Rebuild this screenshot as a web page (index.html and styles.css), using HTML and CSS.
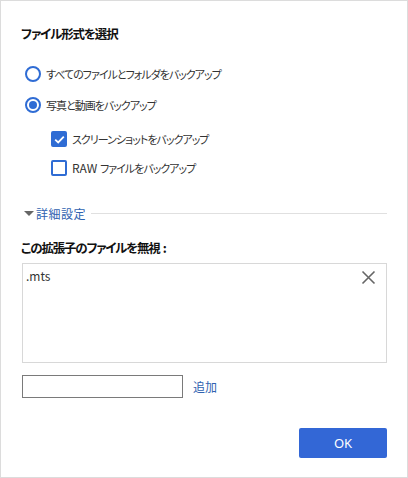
FILE: index.html
```html
<!DOCTYPE html>
<html lang="ja">
<head>
<meta charset="utf-8">
<link rel="stylesheet" href="styles.css">
</head>
<body>
<div class="dialog">
  <div class="title">ファイル形式を選択</div>
  <div class="radios">
    <div class="row"><span class="radio"></span><span>すべてのファイルとフォルダをバックアップ</span></div>
    <div class="row"><span class="radio checked"></span><span>写真と動画をバックアップ</span></div>
  </div>
  <div class="checks">
    <div class="row"><span class="check checked"><svg width="15" height="15" viewBox="0 0 15 15"><path d="M3.2 7.6 L6.2 10.4 L11.8 4.6" fill="none" stroke="#fff" stroke-width="1.8"/></svg></span><span>スクリーンショットをバックアップ</span></div>
    <div class="row"><span class="check"></span><span><span class="latin">RAW </span>ファイルをバックアップ</span></div>
  </div>
  <div class="advanced">
    <span class="tri"></span>
    <span class="link">詳細設定</span>
    <span class="rule"></span>
  </div>
  <div class="label">この拡張子のファイルを無視<span class="colon">:</span></div>
  <div class="box">
    <span class="ext">.mts</span>
    <svg class="close" width="15" height="15" viewBox="0 0 15 15"><path d="M1.5 1.5 L13.5 13.5 M13.5 1.5 L1.5 13.5" stroke="#666" stroke-width="1.6" fill="none"/></svg>
  </div>
  <div class="addrow">
    <span class="input"></span>
    <span class="link add">追加</span>
  </div>
  <div class="footer">
    <button class="ok">OK</button>
  </div>
</div>
</body>
</html>
```
FILE: styles.css
```css
html, body {
  margin: 0;
  padding: 0;
  background: #fff;
}
body {
  width: 408px;
  height: 478px;
  box-sizing: border-box;
  border: 1px solid #dcdcdc;
  font-family: "Noto Sans CJK JP", "Noto Sans", sans-serif;
  font-feature-settings: "palt";
  font-size: 11px;
  letter-spacing: -1px;
  color: #333;
}
.dialog {
  display: flex;
  flex-direction: column;
  padding: 23px 20px 0 20px;
}
.title {
  height: 20px;
  line-height: 20px;
  font-size: 12.5px;
  letter-spacing: -1.1px;
  font-weight: bold;
  color: #111;
}
.row {
  display: flex;
  align-items: center;
  height: 20px;
  line-height: 20px;
}
.latin {
  font-size: 12px;
  letter-spacing: 0;
}
.radios {
  display: flex;
  flex-direction: column;
  gap: 11px;
  margin-top: 20px;
}
.radio {
  box-sizing: border-box;
  width: 16px;
  height: 16px;
  border: 2px solid #2f6cd4;
  border-radius: 50%;
  margin-left: 4px;
  margin-right: 5px;
  display: flex;
  align-items: center;
  justify-content: center;
}
.radio.checked::after {
  content: "";
  width: 8px;
  height: 8px;
  border-radius: 50%;
  background: #2f6cd4;
}
.checks {
  display: flex;
  flex-direction: column;
  gap: 9px;
  margin-top: 14px;
  padding-left: 30px;
}
.check {
  box-sizing: border-box;
  width: 16px;
  height: 16px;
  border: 2px solid #2f6cd4;
  border-radius: 2px;
  margin-right: 5px;
  display: flex;
  align-items: center;
  justify-content: center;
}
.check.checked {
  background: #2f6cd4;
}
.check svg {
  flex: none;
}
.advanced {
  display: flex;
  align-items: center;
  height: 20px;
  margin-top: 25px;
}
.tri {
  width: 0;
  height: 0;
  border-left: 5px solid transparent;
  border-right: 5px solid transparent;
  border-top: 5px solid #666;
  margin-left: 3px;
  margin-right: 2px;
}
.link {
  color: #2f62b0;
  font-size: 12px;
  letter-spacing: 0.5px;
}
.rule {
  flex: 1;
  height: 1px;
  background: #e0e0e0;
  margin-left: 5px;
}
.label {
  height: 20px;
  line-height: 20px;
  font-weight: bold;
  font-size: 12.5px;
  letter-spacing: -1.2px;
  color: #111;
  margin-top: 15px;
}
.colon {
  letter-spacing: 0;
  margin-left: 3px;
}
.box {
  box-sizing: border-box;
  height: 100px;
  margin-top: 5px;
  margin-left: 1px;
  border: 1px solid #d8d8d8;
  display: flex;
  justify-content: space-between;
  align-items: flex-start;
  padding: 3px 10px 0 3px;
}
.ext {
  line-height: 18px;
  font-size: 12px;
  letter-spacing: 0;
}
.close {
  margin-top: 3px;
}
.addrow {
  display: flex;
  align-items: center;
  margin-top: 12px;
  margin-left: 1px;
}
.input {
  box-sizing: border-box;
  width: 161px;
  height: 23px;
  border: 1px solid #7a7a7a;
  background: #fff;
}
.add {
  margin-left: 10px;
  letter-spacing: 0;
}
.footer {
  display: flex;
  justify-content: flex-end;
  margin-top: 30px;
}
.ok {
  width: 88px;
  height: 30px;
  border: none;
  border-radius: 2px;
  background: #3367d6;
  color: #fff;
  font-family: "Noto Sans", "Noto Sans CJK JP", sans-serif;
  font-size: 13px;
  padding: 0;
}
```
